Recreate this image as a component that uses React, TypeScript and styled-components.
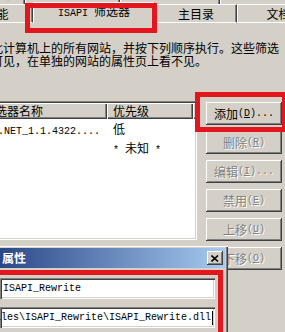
import React from 'react'
import styled, { createGlobalStyle } from 'styled-components'

const face = '#d4d0c8'
const red = '#e3161d'

const GlobalStyle = createGlobalStyle`
    html, body {
        margin: 0;
        padding: 0;
        background: ${face};
        overflow: hidden;
    }
    body {
        font-family: "Noto Sans CJK SC", "Liberation Sans", sans-serif;
        font-size: 12px;
        color: #000;
    }
`

const Page = styled.div`
    position: relative;
    width: 285px;
    height: 332px;
    overflow: hidden;
    background: ${face};
`

// half-width latin text, SimSun style (6px per char)
const Asc = styled.span`
    font-family: "Liberation Mono", "DejaVu Sans Mono", monospace;
    font-size: 10px;
`

const U = styled.span`
    text-decoration: underline;
`

const BackRow = styled.div`
    display: flex;
    align-items: flex-end;
    height: 4px;
    overflow: hidden;
`

const BackTab = styled.div<{ $w: number; $shift?: number }>`
    flex: none;
    width: ${p => p.$w}px;
    margin-left: ${p => p.$shift || 0}px;
    height: 18px;
    box-sizing: border-box;
    border-left: 1px solid #fff;
    border-right: 1px solid #404040;
    box-shadow: inset -1px 0 #808080;
    text-align: center;
    line-height: 16px;
    white-space: nowrap;
`

const FrontRow = styled.div`
    display: flex;
    align-items: flex-end;
    height: 19px;
`

const Tab = styled.div<{ $w: number; $shift?: number; $active?: boolean }>`
    flex: none;
    position: relative;
    width: ${p => p.$w}px;
    margin-left: ${p => p.$shift || 0}px;
    height: ${p => (p.$active ? 21 : 19)}px;
    box-sizing: border-box;
    background: ${face};
    border-top: 1px solid #fff;
    border-left: 1px solid #fff;
    border-right: 1px solid #404040;
    border-bottom: ${p => (p.$active ? 'none' : '1px solid #fff')};
    box-shadow: inset -1px 0 #808080;
    text-align: center;
    line-height: ${p => (p.$active ? 16 : 18)}px;
    white-space: nowrap;
`

const Panel = styled.div`
    padding-top: 18px;
`

const Desc = styled.div`
    margin-left: -9px;
    line-height: 13px;
    white-space: nowrap;
`

const Content = styled.div`
    display: flex;
    align-items: flex-start;
    gap: 9px;
    margin-top: 34px;
`

const ListView = styled.div`
    flex: none;
    width: 222px;
    margin-left: -25px;
    height: 139px;
    box-sizing: border-box;
    padding: 2px;
    background: #fff;
    box-shadow: inset 1px 1px #808080, inset 2px 2px #404040, inset -1px -1px #fff, inset -2px -2px ${face};
`

const Grid = styled.div`
    display: grid;
    grid-template-columns: 130px 86px 1fr;
`

const HeadCell = styled.div`
    height: 16px;
    box-sizing: border-box;
    padding-left: 6px;
    line-height: 16px;
    background: ${face};
    box-shadow: inset 1px 1px #fff, inset -1px -1px #404040, inset -2px -2px #808080;
    white-space: nowrap;
    overflow: hidden;
`

const Cell = styled.div<{ $pad: number }>`
    height: 19px;
    line-height: 19px;
    padding-left: ${p => p.$pad}px;
    white-space: nowrap;
    overflow: hidden;
`

const Buttons = styled.div`
    display: flex;
    flex-direction: column;
    gap: 6px;
    margin-top: 1px;
`

const Btn = styled.div<{ $disabled?: boolean }>`
    width: 76px;
    height: 23px;
    box-sizing: border-box;
    display: flex;
    align-items: center;
    justify-content: center;
    background: ${face};
    box-shadow: inset -1px -1px #404040, inset 1px 1px #fff, inset -2px -2px #808080;
    color: ${p => (p.$disabled ? '#808080' : '#000')};
    text-shadow: ${p => (p.$disabled ? '1px 1px 0 #fff' : 'none')};
    white-space: nowrap;
`

const Dialog = styled.div`
    position: absolute;
    left: -3px;
    top: 245px;
    width: 231px;
    height: 100px;
    box-sizing: border-box;
    padding: 3px;
    background: ${face};
    box-shadow: inset 1px 1px ${face}, inset 2px 2px #fff, inset -1px -1px #404040, inset -2px -2px #808080;
    display: flex;
    flex-direction: column;
`

const TitleBar = styled.div`
    flex: none;
    height: 20px;
    display: flex;
    align-items: center;
    justify-content: space-between;
    padding: 0 2px;
    background: linear-gradient(to right, #2a4888, #a6caf0);
    color: #fff;
    font-weight: bold;
    line-height: 20px;
    white-space: nowrap;
`

const CloseBtn = styled.div`
    width: 16px;
    height: 14px;
    box-sizing: border-box;
    background: ${face};
    box-shadow: inset -1px -1px #404040, inset 1px 1px #fff, inset -2px -2px #808080;
    display: flex;
    align-items: center;
    justify-content: center;
`

const DialogBody = styled.div`
    display: flex;
    flex-direction: column;
    align-items: flex-end;
    gap: 8px;
    padding: 10px 10px 0 0;
`

const Input = styled.div<{ $end?: boolean }>`
    width: 215px;
    height: 21px;
    box-sizing: border-box;
    padding: 0 2px 0 3px;
    background: #fff;
    box-shadow: inset 1px 1px #808080, inset 2px 2px #404040, inset -1px -1px #fff, inset -2px -2px ${face};
    display: flex;
    align-items: center;
    justify-content: ${p => (p.$end ? 'flex-end' : 'flex-start')};
    overflow: hidden;
    white-space: nowrap;
`

const Caret = styled.span`
    flex: none;
    width: 1px;
    height: 14px;
    margin-left: 1px;
    background: #000;
`

const Highlight = styled.div<{ $x: number; $y: number; $w: number; $h: number }>`
    position: absolute;
    left: ${p => p.$x}px;
    top: ${p => p.$y}px;
    width: ${p => p.$w}px;
    height: ${p => p.$h}px;
    box-sizing: border-box;
    border: 5px solid ${red};
    pointer-events: none;
`

const buttons: { label: string; key: string; more?: boolean; disabled?: boolean }[] = [
    { label: '添加', key: 'D', more: true },
    { label: '删除', key: 'R', disabled: true },
    { label: '编辑', key: 'I', more: true, disabled: true },
    { label: '禁用', key: 'E', disabled: true },
    { label: '上移', key: 'U', disabled: true },
    { label: '下移', key: 'O', disabled: true },
]

const App: React.FC = () => {
    return (
        <Page>
            <GlobalStyle />
            <BackRow>
                <BackTab $w={75} $shift={-50}>目录安全性</BackTab>
                <BackTab $w={95}><Asc>HTTP </Asc>头</BackTab>
                <BackTab $w={100}>自定义错误</BackTab>
                <BackTab $w={110}>服务器扩展</BackTab>
            </BackRow>
            <FrontRow>
                <Tab $w={73} $shift={-40}>性能</Tab>
                <Tab $w={122} $active><Asc>ISAPI </Asc>筛选器</Tab>
                <Tab $w={82}>主目录</Tab>
                <Tab $w={83}>文档</Tab>
            </FrontRow>
            <Panel>
                <Desc>
                    <div>此计算机上的所有网站，并按下列顺序执行。这些筛选</div>
                    <div>可见，在单独的网站的属性页上看不见。</div>
                </Desc>
                <Content>
                    <ListView>
                        <Grid>
                            <HeadCell>筛选器名称</HeadCell>
                            <HeadCell>优先级</HeadCell>
                            <HeadCell />
                            <Cell $pad={3}><Asc>ASP.NET_1.1.4322....</Asc></Cell>
                            <Cell $pad={6}>低</Cell>
                            <Cell $pad={0} />
                            <Cell $pad={3} />
                            <Cell $pad={6}><Asc>* </Asc>未知<Asc> *</Asc></Cell>
                            <Cell $pad={0} />
                        </Grid>
                    </ListView>
                    <Buttons>
                        {buttons.map(b => (
                            <Btn key={b.key} $disabled={b.disabled}>
                                {b.label}
                                <Asc>(<U>{b.key}</U>){b.more ? '...' : ''}</Asc>
                            </Btn>
                        ))}
                    </Buttons>
                </Content>
            </Panel>
            <Dialog>
                <TitleBar>
                    <span>属性</span>
                    <CloseBtn>
                        <svg width="8" height="7" viewBox="0 0 8 7">
                            <path d="M0.5 0.5 L7 6.5 M7 0.5 L0.5 6.5" stroke="#000" strokeWidth="1.6" fill="none" />
                        </svg>
                    </CloseBtn>
                </TitleBar>
                <DialogBody>
                    <Input><Asc>ISAPI_Rewrite</Asc></Input>
                    <Input $end>
                        <Asc>C:\Program Files\ISAPI_Rewrite\ISAPI_Rewrite.dll</Asc>
                        <Caret />
                    </Input>
                </DialogBody>
            </Dialog>
            <Highlight $x={25} $y={3} $w={132} $h={30} />
            <Highlight $x={195} $y={92} $w={92} $h={40} />
            <Highlight $x={-10} $y={270} $w={233} $h={80} />
        </Page>
    )
}

export default App
